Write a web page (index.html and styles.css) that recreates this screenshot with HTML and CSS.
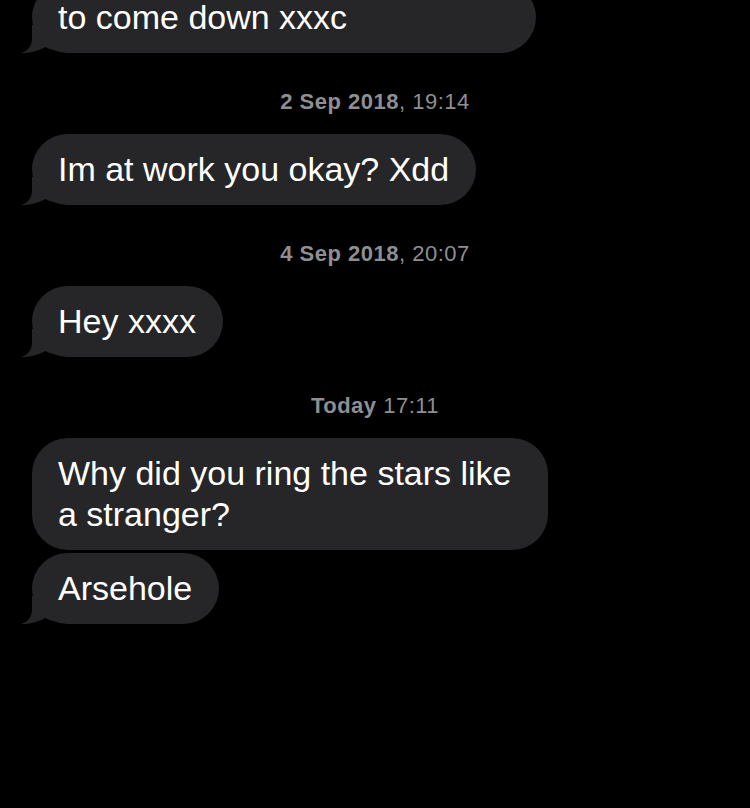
FILE: index.html
```html
<!DOCTYPE html>
<html>
<head>
<meta charset="utf-8">
<link rel="stylesheet" href="styles.css">
</head>
<body>
<div class="thread">
  <div class="bubble first tail">to come down xxxc<svg class="tail-svg" viewBox="0 0 34 28" width="34" height="28"><path d="M12 0 L12 13 C12 21 8 26 1 28 C10 28.5 18 26 25.5 22 C28 23.5 31 24.5 34 25 L34 0 Z"/></svg></div>
  <div class="stamp"><b>2 Sep 2018</b>, 19:14</div>
  <div class="bubble tail">Im at work you okay? Xdd<svg class="tail-svg" viewBox="0 0 34 28" width="34" height="28"><path d="M12 0 L12 13 C12 21 8 26 1 28 C10 28.5 18 26 25.5 22 C28 23.5 31 24.5 34 25 L34 0 Z"/></svg></div>
  <div class="stamp"><b>4 Sep 2018</b>, 20:07</div>
  <div class="bubble tail">Hey xxxx<svg class="tail-svg" viewBox="0 0 34 28" width="34" height="28"><path d="M12 0 L12 13 C12 21 8 26 1 28 C10 28.5 18 26 25.5 22 C28 23.5 31 24.5 34 25 L34 0 Z"/></svg></div>
  <div class="stamp"><b>Today</b> 17:11</div>
  <div class="bubble wide">Why did you ring the stars like a stranger?</div>
  <div class="bubble tail close">Arsehole<svg class="tail-svg" viewBox="0 0 34 28" width="34" height="28"><path d="M12 0 L12 13 C12 21 8 26 1 28 C10 28.5 18 26 25.5 22 C28 23.5 31 24.5 34 25 L34 0 Z"/></svg></div>
</div>
</body>
</html>
```
FILE: styles.css
```css
html, body {
  margin: 0;
  padding: 0;
  background: #000;
  height: 100%;
  overflow: hidden;
}
.thread {
  display: flex;
  flex-direction: column;
  align-items: flex-start;
  margin-top: -18px;
  padding-left: 32px;
  width: 750px;
  box-sizing: border-box;
  font-family: "Liberation Sans", Arial, sans-serif;
}
.bubble {
  position: relative;
  background: #262628;
  color: #fff;
  font-size: 34px;
  line-height: 41px;
  padding: 15px 27px 15px 26px;
  border-radius: 36px;
  box-sizing: border-box;
}
.bubble.first {
  width: 504px;
  line-height: 34px;
  padding-top: 18px;
  padding-bottom: 19px;
}
.bubble.wide {
  width: 516px;
}
.bubble.close {
  margin-top: 3px;
}
.tail-svg {
  position: absolute;
  left: -12px;
  bottom: 0;
  fill: #262628;
}
.stamp {
  align-self: center;
  margin-left: -32px;
  color: #8e8e93;
  font-size: 22px;
  letter-spacing: 0.5px;
  line-height: 26px;
  padding: 36px 0 19px;
}
.stamp b {
  font-weight: 600;
}
```
